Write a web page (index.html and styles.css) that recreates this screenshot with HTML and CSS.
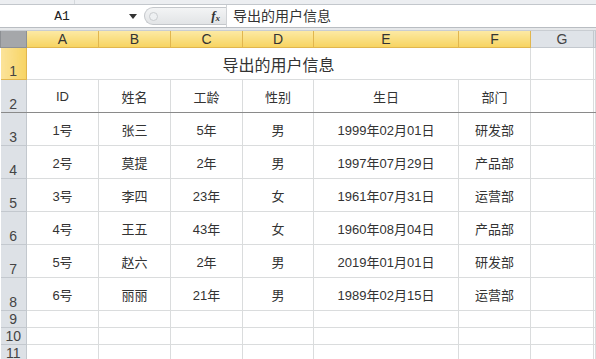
FILE: index.html
```html
<!DOCTYPE html>
<html lang="zh-CN">
<head>
    <meta charset="UTF-8">
    <title>导出的用户信息</title>
    <link rel="stylesheet" href="styles.css">
</head>
<body>
    <div class="ribbon-edge">
        <span class="ribbon-split"></span>
    </div>

    <div class="formula-bar">
        <div class="name-box">A1</div>
        <div class="name-arrow">
            <svg width="8" height="5" viewBox="0 0 8 5"><path d="M0 0h8L4 5z" fill="#333"/></svg>
        </div>
        <div class="fx-pill">
            <span class="pill-dot"></span>
            <span class="fx">f<sub>x</sub></span>
        </div>
        <div class="formula-input">导出的用户信息</div>
    </div>

    <div class="bar-gap"></div>

    <table class="sheet">
        <colgroup>
            <col class="c-head">
            <col class="c-72">
            <col class="c-72">
            <col class="c-72">
            <col class="c-71">
            <col class="c-145">
            <col class="c-72">
            <col class="c-63">
            <col>
        </colgroup>
        <tr class="col-heads">
            <th class="corner"></th>
            <th class="sel">A</th>
            <th class="sel">B</th>
            <th class="sel">C</th>
            <th class="sel">D</th>
            <th class="sel">E</th>
            <th class="sel">F</th>
            <th>G</th>
            <th></th>
        </tr>
        <tr class="r-title">
            <th class="row-head sel">1</th>
            <td colspan="6" class="title">导出的用户信息</td>
            <td></td><td></td>
        </tr>
        <tr class="r-big frozen">
            <th class="row-head">2</th>
            <td>ID</td><td>姓名</td><td>工龄</td><td>性别</td><td>生日</td><td>部门</td><td></td><td></td>
        </tr>
        <tr class="r-big">
            <th class="row-head">3</th>
            <td>1号</td><td>张三</td><td>5年</td><td>男</td><td>1999年02月01日</td><td>研发部</td><td></td><td></td>
        </tr>
        <tr class="r-big">
            <th class="row-head">4</th>
            <td>2号</td><td>莫提</td><td>2年</td><td>男</td><td>1997年07月29日</td><td>产品部</td><td></td><td></td>
        </tr>
        <tr class="r-big">
            <th class="row-head">5</th>
            <td>3号</td><td>李四</td><td>23年</td><td>女</td><td>1961年07月31日</td><td>运营部</td><td></td><td></td>
        </tr>
        <tr class="r-big">
            <th class="row-head">6</th>
            <td>4号</td><td>王五</td><td>43年</td><td>女</td><td>1960年08月04日</td><td>产品部</td><td></td><td></td>
        </tr>
        <tr class="r-big">
            <th class="row-head">7</th>
            <td>5号</td><td>赵六</td><td>2年</td><td>男</td><td>2019年01月01日</td><td>研发部</td><td></td><td></td>
        </tr>
        <tr class="r-big">
            <th class="row-head">8</th>
            <td>6号</td><td>丽丽</td><td>21年</td><td>男</td><td>1989年02月15日</td><td>运营部</td><td></td><td></td>
        </tr>
        <tr class="r-small">
            <th class="row-head">9</th>
            <td></td><td></td><td></td><td></td><td></td><td></td><td></td><td></td>
        </tr>
        <tr class="r-small">
            <th class="row-head">10</th>
            <td></td><td></td><td></td><td></td><td></td><td></td><td></td><td></td>
        </tr>
        <tr class="r-small">
            <th class="row-head">11</th>
            <td></td><td></td><td></td><td></td><td></td><td></td><td></td><td></td>
        </tr>
    </table>
</body>
</html>
```

FILE: styles.css
```css
body {
    margin: 0;
    width: 596px;
    height: 359px;
    overflow: hidden;
    background: #fff;
    font-family: "Liberation Sans", "Noto Sans CJK SC", sans-serif;
    color: #333;
}
.ribbon-edge {
    height: 4px;
    background: #eceef1;
    border-bottom: 1px solid #c3c7cc;
    display: flex;
}
.ribbon-split {
    width: 74px;
    border-right: 1px solid #d4d8dc;
}
.formula-bar {
    height: 22px;
    display: flex;
    align-items: center;
    background: #fff;
}
.name-box {
    width: 124px;
    text-align: center;
    font-family: "Liberation Mono", monospace;
    font-size: 13px;
    color: #222;
}
.name-arrow {
    width: 20px;
    display: flex;
    align-items: center;
    padding-left: 5px;
    box-sizing: border-box;
}
.fx-pill {
    width: 82px;
    height: 18px;
    box-sizing: border-box;
    border: 1px solid #c4c7cb;
    border-right: none;
    border-radius: 9px 0 0 9px;
    background: linear-gradient(#f3f4f5, #e2e4e6);
    display: flex;
    align-items: center;
    justify-content: space-between;
    padding: 0 6px 0 4px;
}
.pill-dot {
    width: 7px;
    height: 7px;
    border-radius: 50%;
    border: 1px solid #c9cccf;
    background: #eef0f2;
}
.fx {
    font-family: "Liberation Serif", serif;
    font-style: italic;
    font-weight: bold;
    font-size: 13px;
    color: #333;
}
.fx sub {
    font-size: 9px;
    vertical-align: -1px;
}
.formula-input {
    flex: 1;
    height: 22px;
    line-height: 22px;
    border-left: 1px solid #d0d3d6;
    padding-left: 6px;
    font-size: 14px;
    color: #333;
}
.bar-gap {
    height: 2px;
    background: #e6e8ea;
    border-top: 1px solid #b9bdc2;
    border-bottom: 1px solid #c9cdd2;
}
.sheet {
    border-collapse: collapse;
    table-layout: fixed;
    width: 596px;
    font-size: 13px;
}
.c-head { width: 26px; }
.c-72 { width: 72px; }
.c-71 { width: 71px; }
.c-145 { width: 145px; }
.c-63 { width: 63px; }
.sheet th, .sheet td {
    padding: 0;
    white-space: nowrap;
    overflow: hidden;
}
.sheet td {
    border: 1px solid #dadcdd;
    text-align: center;
    vertical-align: middle;
}
.col-heads th {
    height: 16px;
    font-weight: normal;
    font-size: 14px;
    color: #444;
    background: #dfe3e8;
    border: 1px solid #c3c8ce;
    border-top: none;
}
.col-heads th.sel {
    background: linear-gradient(#fce9a4, #f7d461);
    border-color: #e1b64e;
    color: #333;
}
.col-heads th.corner {
    background: #a5a7aa;
    border-color: #8d9094;
}
.row-head {
    font-weight: normal;
    font-size: 14px;
    color: #444;
    background: #dde1e6;
    border: 1px solid #c3c8ce;
    border-left: none;
    vertical-align: bottom;
    line-height: 16px;
}
.row-head.sel {
    background: linear-gradient(90deg, #fbe39a, #f7d464);
    border-color: #e1b64e;
}
.r-title { height: 32px; }
.r-big { height: 33px; }
.r-small { height: 17px; }
.title {
    font-size: 16px;
    color: #333;
}
.frozen th, .frozen td {
    border-bottom: 1px solid #8a8a8a;
}
```
